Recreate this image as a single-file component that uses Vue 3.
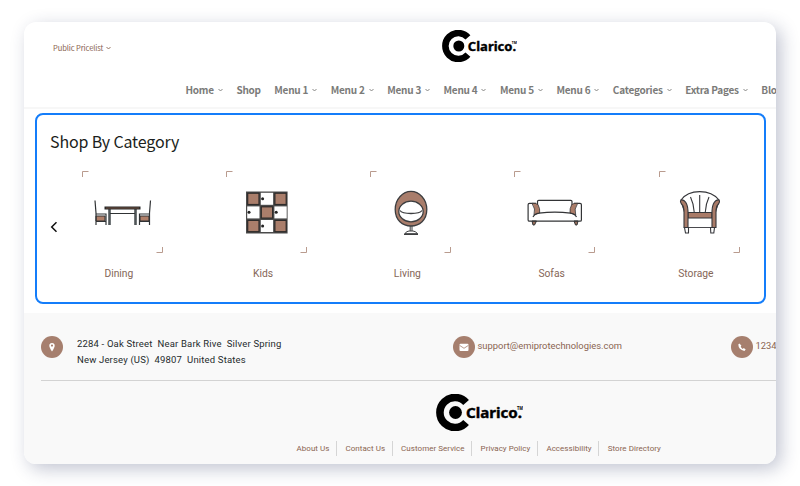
<script setup>
import { h } from 'vue'

const nav = [
  ['Home', true], ['Shop', false], ['Menu 1', true], ['Menu 2', true], ['Menu 3', true],
  ['Menu 4', true], ['Menu 5', true], ['Menu 6', true], ['Categories', true],
  ['Extra Pages', true], ['Blog', false],
]
const categories = ['Dining', 'Kids', 'Living', 'Sofas', 'Storage']
const links = ['About Us', 'Contact Us', 'Customer Service', 'Privacy Policy', 'Accessibility', 'Store Directory']
const doors = [0, 1, 2, 3, 4, 5, 6, 7, 8].map((i) => ({
  x: 20.5 + (i % 3) * 13.6,
  y: 21.2 + Math.floor(i / 3) * 13.6,
  filled: i % 2 === 0,
}))

const logoText = { 'font-family': '"Noto Sans", "Open Sans", sans-serif', 'font-weight': 700, fill: '#000', stroke: '#000' }
const Logo = () =>
  h('svg', { viewBox: '0 0 87 37' }, [
    h('path', { d: 'M30.1 8.5A15 15 0 1 0 30.1 28.5', fill: 'none', stroke: '#000', 'stroke-width': 7.6 }),
    h('circle', { cx: 19.5, cy: 18.5, r: 6.4 }),
    h('text', { ...logoText, 'stroke-width': 0.4, x: 30, y: 24.3, 'font-size': 14, textLength: 56, lengthAdjust: 'spacingAndGlyphs' }, 'Clarico.'),
    h('text', { ...logoText, 'stroke-width': 0, x: 81, y: 16.2, 'font-size': 4.8, textLength: 6, lengthAdjust: 'spacingAndGlyphs' }, 'TM'),
  ])
const Chevron = () =>
  h('svg', { viewBox: '0 0 5 4' }, [
    h('path', { d: 'M.5 1 2.5 3 4.500 1', fill: 'none', stroke: 'currentColor', 'stroke-width': 0.9 }),
  ])
</script>

<template>
  <div class="stage">
    <div class="card">
      <header>
        <div class="top">
          <div class="pricelist">Public Pricelist<Chevron class="chev" /></div>
          <Logo class="logo" />
        </div>
        <nav>
          <a v-for="[name, menu] in nav" :key="name">{{ name }}<Chevron v-if="menu" class="chev" /></a>
        </nav>
      </header>

      <section>
        <h2>Shop By Category</h2>
        <svg class="prev" viewBox="0 0 8 12"><path d="M6.5 1.2 1.7 6l4.8 4.8" fill="none" stroke="#111" stroke-width="1.5" /></svg>
        <div class="list">
          <div v-for="name in categories" :key="name" class="item">
            <svg class="art" viewBox="0 0 81 82">
              <path d="M.5 6V.5H6.5M80.5 76v5.5h-6" fill="none" stroke="#b99b8e" />
              <g v-if="name === 'Dining'" fill="none" stroke="#303335">
                <path d="M14 45h9v5h-9zM58 45h9v5h-9z" fill="#b07f69" />
                <path d="M13 29.5 14 42v12M68.500 29.500 67.500 42v12M14 43h10v11M67 43H57.500v11M14 50.5h10M57 50.5h10" stroke-width="1.2" />
                <path d="M27.500 38v16M53.500 38v16" stroke="#505658" stroke-width="2.6" />
                <path d="M28 42.5h25" />
                <path d="M22.500 37H58.500" stroke="#292929" stroke-width="3" />
                <path d="M24 37h33" stroke="#73503f" stroke-width="1" />
              </g>
              <g v-else-if="name === 'Kids'">
                <path d="M20 20.5h41.6v42H20z" fill="#4b4b4b" />
                <template v-for="(d, i) in doors" :key="i">
                  <rect v-if="d.filled" :x="d.x + 1.2" :y="d.y + 1" width="11.3" height="11.3" fill="#aa7e6b" stroke="#2d2b2a" stroke-width="1.2" />
                  <g v-else>
                    <rect :x="d.x + .7" :y="d.y + .6" width="12.3" height="12" fill="#fff" />
                    <circle :cx="d.x + 2.5" :cy="d.y + 6.5" r="1.5" fill="#222" />
                  </g>
                </template>
              </g>
              <g v-else-if="name === 'Living'" fill="none" stroke="#3d3e40">
                <path d="M41 20.3C49 20.3 56.8 28 56.8 38.5S49.5 55 41 55 25.2 49 25.2 38.5 33 20.3 41 20.3z" fill="#a97d6b" stroke-width="1.3" />
                <ellipse cx="41" cy="40.500" rx="12.2" ry="10.3" fill="#fff" stroke-width="1.3" />
                <path d="M30 39.5Q32 42.500 41 42.500T52 39.500" stroke-width="1.3" />
                <path d="M40.2 55v5M42 55v5M35 62.8q1-2.6 4-2.8h4q3 .2 4.5 2.8z" />
                <path d="M34 63.2h14" stroke-width="1.4" />
              </g>
              <g v-else-if="name === 'Sofas'" fill="none" stroke="#333436" stroke-width="1.2">
                <path d="m18 50 1 4h1.5l2-4zM60 50l1.5 4H63l1-4z" fill="#9a705d" stroke-width="1" />
                <path d="M23.5 34v-3.5q0-1.2 1.2-1.2h32.1q1.2 0 1.2 1.2V34M22 32.3h-6.5q-1.4 0-1.4 1.4v15.2q0 1.3 1.4 1.3h50.5q1.4 0 1.4-1.3V33.7q0-1.4-1.4-1.4H60" />
                <path d="M18 32.3q4-.3 6 1.3 2.2 4 1.7 8.4l-5.7 2q2-6-2-11.700z" fill="#ab7d69" stroke-width=".8" />
                <path d="M63.7 32.3q-4-.3-6 1.3-2.2 4-1.7 8.4l5.700 2q-2-6 2-11.700z" fill="#ab7d69" stroke-width=".8" />
                <path d="M19 46q2-3.5 6-3.8 16-2 31.5 0 4 .3 6 3.8" />
              </g>
              <g v-else fill="none" stroke="#35363a" stroke-width="1.1">
                <path d="M22 29q6-8.4 18.7-8.4T60 29l-4 14H26z" fill="#fff" />
                <path d="M40.7 24v17M31.5 26q3.3 7 3.7 15M50 26q-3.3 7-3.7 15" />
                <path d="M27 56.5h28" stroke-width=".9" />
                <path d="M25.5 56.5h4V62h-3zM51.5 56.5h4l-.7 5.5h-3z" fill="#fff" />
                <path d="M29 41.5h24V47H29z" fill="#a97b68" />
                <path d="M22 29q-1.2 1.5.2 3.5 2.4 2 2.8 6.5v17.5h4V40q-.3-7.5-3.8-10.2Q23.5 28.5 22 29zM60 29q1.2 1.5-.2 3.5Q57.4 34.5 57 39v17.5h-4V40q.3-7.5 3.8-10.2Q58.5 28.5 60 29z" fill="#a97b68" />
              </g>
            </svg>
            <span>{{ name }}</span>
          </div>
        </div>
      </section>

      <footer>
        <div class="contact">
          <div class="entry address">
            <svg class="badge" viewBox="0 0 22 22"><circle cx="11" cy="11" r="11" fill="#a67f6e" /><path d="M11 15.500Q8.300 11.500 8.300 9.700a2.700 2.700 0 0 1 5.400 0Q13.700 11.500 11 15.500zm0-7a1.100 1.100 0 1 0 0 2.200 1.100 1.100 0 0 0 0-2.200z" fill="#fff" /></svg>
            <p>2284 - Oak Street&nbsp; Near Bark Rive&nbsp; Silver Spring<br>New Jersey (US)&nbsp; 49807&nbsp; United States</p>
          </div>
          <div class="entry mail">
            <svg class="badge" viewBox="0 0 22 22"><circle cx="11" cy="11" r="11" fill="#a67f6e" /><rect x="6.500" y="7.800" width="9" height="7.200" rx="1" fill="#fff" /><path d="m6.500 9.300 4.500 3 4.500-3" fill="none" stroke="#a67f6e" stroke-width=".8" /></svg>
            <span>support@emiprotechnologies.com</span>
          </div>
          <div class="entry">
            <svg class="badge" viewBox="0 0 22 22"><circle cx="11" cy="11" r="11" fill="#a67f6e" /><path d="M8.300 7.500 7.300 8.600q.2 5.400 6.100 6.300l1.300-1.300-1.900-1.500-1.100.8q-1.600-.8-2-2.300l.7-1z" fill="#fff" /></svg>
            <span>1234567890</span>
          </div>
        </div>
        <Logo class="logo big" />
        <div class="links"><a v-for="l in links" :key="l">{{ l }}</a></div>
      </footer>
    </div>
  </div>
</template>

<style>
body { margin: 0; background: #fff; overflow: hidden; }
</style>

<style scoped>
* { box-sizing: border-box; }
.stage { height: 486px; padding: 22px 24px; font-family: Roboto, "Liberation Sans", sans-serif; }
.card { width: 752px; height: 442px; overflow: hidden; border-radius: 12px; background: #fff; display: flex; flex-direction: column; box-shadow: 5px 5px 18px rgba(35, 45, 95, .28); }
header { height: 87px; flex: none; border-bottom: 2px solid #f7f7f7; font-family: "Noto Sans CJK SC", sans-serif; }
.top { height: 50px; display: grid; grid-template-columns: 418px 1fr; padding-top: 8px; }
.pricelist { display: flex; align-items: center; height: 34px; padding-left: 29px; font-size: 7.600px; letter-spacing: -.12px; color: #8a6451; white-space: nowrap; }
.chev { width: 5px; height: 4px; margin: 1px 0 0 4px; flex: none; }
.pricelist .chev { margin-left: 3px; }
.logo { display: block; width: 75px; height: 32px; }
nav { display: flex; height: 35px; align-items: center; gap: 13.500px; margin-left: 161.500px; font-size: 10px; letter-spacing: -.23px; font-weight: 700; color: #7b7b79; white-space: nowrap; }
nav a { display: flex; align-items: center; flex: none; }
section { position: relative; width: 731px; height: 191px; margin: 4px 0 0 11px; border: 2px solid #147dfa; border-radius: 8px; flex: none; }
h2 { margin: 0; padding: 13px 0 0 13px; height: 56px; font: 400 16px/26px "Noto Sans CJK SC", sans-serif; letter-spacing: -.15px; color: #1b1e20; }
.prev { position: absolute; left: 13px; top: 106px; width: 8px; height: 12px; }
.list { display: grid; grid-template-columns: repeat(5, 144.250px); margin-left: 9.750px; }
.item { display: flex; flex-direction: column; align-items: center; font-size: 10.300px; color: #856657; }
.art { width: 81px; height: 82px; margin: 0 0 14px 6.500px; }
.item span { line-height: 14px; }
footer { margin-top: 9px; flex: 1; background: #f9f9f9; }
.contact { display: flex; width: 735px; height: 68px; margin-left: 17px; padding-top: 23px; border-bottom: 1px solid #d3d3d3; overflow: hidden; }
.entry { display: flex; flex: none; font-size: 9.400px; line-height: 16px; color: #8a6451; white-space: nowrap; }
.address { width: 412px; color: #252b2d; font-size: 9.500px; letter-spacing: .17px; }
.mail { width: 278px; }
.badge { width: 22px; height: 22px; flex: none; }
.entry p { margin: 0 0 0 14px; }
.entry span { padding: 2px 0 0 2.500px; }
.big { width: 87px; height: 37px; margin: 13px 0 0 412px; }
.links { display: flex; height: 15px; margin: 10px 0 0 264px; font-size: 8px; letter-spacing: .04px; line-height: 15px; color: #8a6451; white-space: nowrap; }
.links a { padding: 0 6.500px 0 8.500px; border-right: 1px solid #d5d5d5; }
.links a:last-child { border: 0; }
</style>
